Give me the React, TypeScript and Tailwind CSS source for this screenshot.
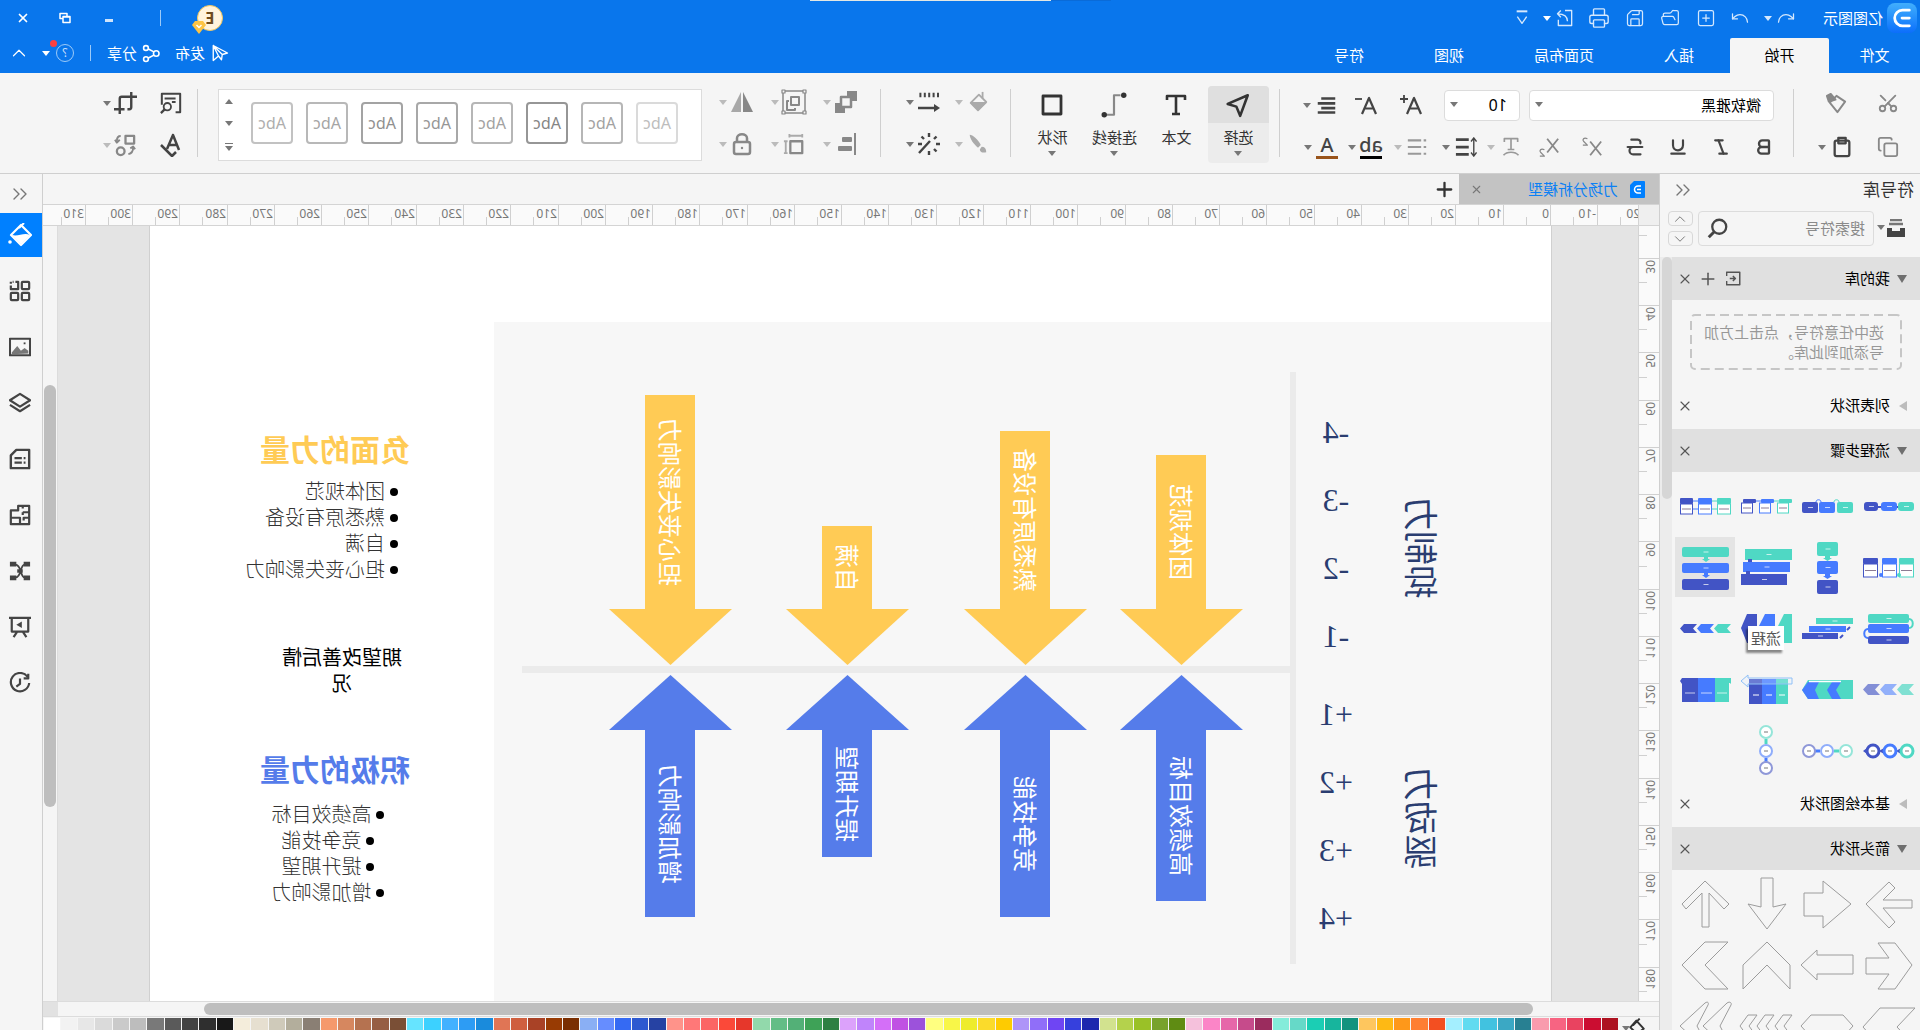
import React from "react";
import type { ReactNode } from "react";
import {
  Undo, Redo, SquarePlus, FolderOpen, Save, Printer, X, ChevronUp, ChevronDown,
  ChevronsLeft, Plus, Scissors, Copy, Bold, Italic, Underline, Strikethrough,
} from "lucide-react";

const TEAL = "#4fd8c4";
const BLUE = "#467bff";
const NAVY = "#4254c5";

function Ico({ size = 22, vb = 24, className = "", children }: { size?: number; vb?: number; className?: string; children: ReactNode }) {
  return (
    <svg width={size} height={size} viewBox={`0 0 ${vb} ${vb}`} className={`shrink-0 ${className}`} fill="none" stroke="currentColor" strokeWidth="2" strokeLinejoin="round" aria-hidden="true">
      {children}
    </svg>
  );
}

function Caret({ className = "text-[#777]" }: { className?: string }) {
  return (
    <svg width="8" height="5" viewBox="0 0 8 5" className={`shrink-0 ${className}`} aria-hidden="true">
      <path d="M0 0h8L4 5z" fill="currentColor" />
    </svg>
  );
}

function Btn({ label, className = "", children }: { label: string; className?: string; children: ReactNode }) {
  return (
    <button type="button" aria-label={label} className={`flex shrink-0 items-center justify-center ${className}`}>
      {children}
    </button>
  );
}

/* ---------- header ---------- */

const tabsAfter = ["插入", "页面布局", "视图", "符号"];

function Header() {
  return (
    <header className="relative flex h-[73px] shrink-0 justify-between bg-[#0976ec] text-[15px] text-white">
      <div className="absolute left-[809px] top-0 flex h-px">
        <div className="w-[60px] bg-[#0a6bd8]" />
        <div className="w-[241px] bg-[#e3e8e4]" />
      </div>
      <div className="flex flex-col justify-between">
        <div className="flex h-9 items-center pl-[3px] text-[#d5e8fd]">
          <div className="flex size-[30px] items-center justify-center rounded-lg bg-linear-to-b from-[#41aefc] to-[#0d6efb] text-white">
            <Ico size={22}>
              <path d="M4 3.500h7.500a8.500 8.500 0 0 1 0 17H4M4 12h8" strokeWidth="3" strokeLinecap="round" />
            </Ico>
          </div>
          <span className="ml-1 text-white">亿图图示</span>
          <Btn label="撤销" className="ml-[27px]"><Undo size={20} strokeWidth={1.5} /></Btn>
          <Caret className="ml-1 text-[#d5e8fd]" />
          <Btn label="重做" className="ml-[14px]"><Redo size={20} strokeWidth={1.5} /></Btn>
          <Btn label="新建" className="ml-[14px]"><SquarePlus size={20} strokeWidth={1.5} /></Btn>
          <Btn label="打开" className="ml-4"><FolderOpen size={20} strokeWidth={1.5} /></Btn>
          <Btn label="保存" className="ml-[15px]"><Save size={20} strokeWidth={1.5} /></Btn>
          <Btn label="打印" className="ml-[15px]"><Printer size={22} strokeWidth={1.5} /></Btn>
          <Btn label="导出" className="ml-[13px]">
            <Ico size={20}>
              <path d="M12 3H4v18h16V14M9 16c0-6 4-9 12-9M17 3l4 4-4 4" strokeWidth="1.600" />
            </Ico>
          </Btn>
          <Caret className="ml-1 text-white" />
          <Btn label="自定义" className="ml-[13px]">
            <Ico size={16}>
              <path d="M4 2h16" strokeWidth="3" />
              <path d="M5 10l7 10 7-10" />
            </Ico>
          </Btn>
        </div>
        <nav className="flex h-[35px]">
          <button type="button" className="w-[91px] pb-px">文件</button>
          <button type="button" className="mr-px w-[99px] rounded-t-xs bg-[#f5f5f5] text-black">开始</button>
          {tabsAfter.map((t) => (
            <button type="button" key={t} className="px-[35px]">{t}</button>
          ))}
        </nav>
      </div>
      <div className="flex flex-col">
        <div className="flex h-9 items-center justify-end pr-[15px]">
          <div className="relative mr-9 flex size-[26px] items-center justify-center rounded-full border border-[#f3c75e] bg-[#fff3dc] text-base font-bold text-[#6d4a1c]">
            E
            <svg width="14" height="14" viewBox="0 0 14 14" className="absolute -right-1.5 top-3.5" aria-hidden="true">
              <path d="M3 1h8l3 4-7 9-7-9z" fill="#fdc445" />
              <path d="M4.500 5l2.500 2.500L9.500 5" stroke="#fff" fill="none" strokeWidth="1.500" />
            </svg>
          </div>
          <div className="mr-[43px] h-4 w-px bg-[#9ccaf8]" />
          <Btn label="最小化" className="mr-7 w-4"><span className="mt-1 h-[3px] w-2 bg-[#cfe4fb]" /></Btn>
          <Btn label="还原" className="mr-[26px] w-4">
            <Ico size={12} vb={12}>
              <path d="M1 4.500h7v6H1zM1 5h7M4 4V1.500h7v5H8" strokeWidth="1.500" />
            </Ico>
          </Btn>
          <Btn label="关闭" className="w-4"><X size={14} strokeWidth={3} /></Btn>
        </div>
        <div className="flex h-[34px] items-center justify-end pr-2">
          <button type="button" className="mr-[14px] flex items-center gap-[6px]">
            <Ico size={18}>
              <path d="M2 12L21 2v20l-7-6-4 5-1-7z M14 16L21 2L9 14" strokeWidth="1.800" />
            </Ico>
            发布
          </button>
          <button type="button" className="mr-4 flex items-center gap-[5px]">
            <Ico size={19}>
              <circle cx="6" cy="12" r="3.500" />
              <circle cx="19" cy="5" r="3" />
              <circle cx="19" cy="19" r="3" />
              <path d="M9 10l7.500-4M9 14l7.500 4" />
            </Ico>
            分享
          </button>
          <div className="mr-4 h-4 w-px bg-[#9ccaf8]" />
          <Btn label="帮助" className="relative">
            <span className="flex size-[18px] items-center justify-center rounded-full border border-[#9ccaf8] text-xs text-[#c6dffb]">?</span>
            <span className="absolute -right-1.5 -top-1 size-[7px] rounded-full bg-[#fb4040]" />
          </Btn>
          <Caret className="ml-[6px] text-white" />
          <Btn label="收起功能区" className="ml-3"><ChevronUp size={22} strokeWidth={1.3} /></Btn>
        </div>
      </div>
    </header>
  );
}

/* ---------- toolbar ---------- */

function ToolWithCaret({ label, dim = false, children }: { label: string; dim?: boolean; children: ReactNode }) {
  return (
    <button type="button" aria-label={label} className="flex w-[35px] items-center gap-[3px]">
      <span className="flex size-6 items-center justify-center">{children}</span>
      <Caret className={dim ? "text-[#bbb]" : "text-[#777]"} />
    </button>
  );
}

function BigTool({ label, caret = true, active = false, children }: { label: string; caret?: boolean; active?: boolean; children: ReactNode }) {
  return (
    <button type="button" className={`flex h-[77px] w-[61px] flex-col items-center rounded-sm text-[15px] text-[#333] ${active ? "bg-[#ececec]" : ""}`}>
      <span className={`flex h-[37px] w-full items-center justify-center ${active ? "rounded-t-sm bg-[#dfdfdf]" : ""}`}>{children}</span>
      <span className="mt-[3px] leading-[22px]">{label}</span>
      {caret ? <Caret className="mt-[3px] text-[#777]" /> : null}
    </button>
  );
}

const styleBoxes = [
  "border-[#dadada] text-[#bdbdbd]",
  "border-[#b6b6b6] text-[#a2a2a2]",
  "border-[#969696] text-[#858585]",
  "border-[#b6b6b6] text-[#a2a2a2]",
  "border-[#a8a8a8] text-[#969696]",
  "border-[#a3a3a3] text-[#909090]",
  "border-[#b8b8b8] text-[#a5a5a5]",
  "border-[#c2c2c2] text-[#aeaeae]",
];

function Divider() {
  return <div className="my-4 w-px shrink-0 bg-[#cfcfcf]" />;
}

function Toolbar() {
  return (
    <div className="flex h-[101px] shrink-0 border-b border-[#cfcfcf] bg-[#f5f5f5] text-[#444]">
      <div className="flex w-[126px] shrink-0 flex-col pl-5 pt-[11px]">
        <div className="flex h-[42px] items-center pb-1 text-[#888]">
          <Btn label="剪切" className="w-6"><Scissors size={22} className="-rotate-90" /></Btn>
          <Btn label="格式刷" className="ml-[27px] w-6">
            <Ico size={23}>
              <path d="M3 10l9-6 7 7-8 10z" />
              <path d="M13 8l5-6 4 2-2 6z" fill="currentColor" />
            </Ico>
          </Btn>
        </div>
        <div className="flex h-[42px] items-center">
          <Btn label="复制" className="w-6 text-[#888]"><Copy size={22} className="-scale-x-100" /></Btn>
          <Btn label="粘贴" className="ml-[22px] w-6">
            <Ico size={22}>
              <rect x="4" y="5" width="16" height="17" rx="2" strokeWidth="2.500" />
              <path d="M8 2h8v6H8z" strokeWidth="2.500" />
            </Ico>
          </Btn>
          <Caret className="ml-1 text-[#777]" />
        </div>
      </div>
      <Divider />
      <div className="flex w-[513px] shrink-0 flex-col pt-[11px]">
        <div className="flex h-[42px] items-center pl-[19px]">
          <div className="relative">
            <select aria-label="字体" defaultValue="yahei" className="block h-[31px] w-[245px] appearance-none rounded-sm border border-[#dcdcdc] bg-white px-3 text-[15px] text-black">
              <option value="yahei">微软雅黑</option>
            </select>
            <span className="absolute right-1.5 top-3"><Caret /></span>
          </div>
          <div className="relative ml-[9px]">
            <select aria-label="字号" defaultValue="10" className="block h-[31px] w-[76px] appearance-none rounded-sm border border-[#dcdcdc] bg-white px-3 text-base text-black">
              <option>10</option>
            </select>
            <span className="absolute right-1.5 top-3"><Caret /></span>
          </div>
          <Btn label="增大字号" className="ml-[21px] w-6">
            <Ico size={24}>
              <path d="M2 21L9 5l7 16M4.500 15.500h9" strokeWidth="2.200" />
              <path d="M19 2v8M15 6h8" strokeWidth="1.800" />
            </Ico>
          </Btn>
          <Btn label="减小字号" className="ml-[21px] w-6">
            <Ico size={24}>
              <path d="M2 21L9 5l7 16M4.500 15.500h9" strokeWidth="2.200" />
              <path d="M16 6h7" strokeWidth="1.800" />
            </Ico>
          </Btn>
          <Btn label="对齐" className="ml-[15px] w-6">
            <Ico size={21}>
              <path d="M2 4h16M2 9.500h20M2 15h16M2 20h20" strokeWidth="3" />
            </Ico>
          </Btn>
          <Caret className="ml-1 text-[#777]" />
        </div>
        <div className="flex h-[42px] items-center pl-[17px]">
          <Btn label="加粗" className="w-6"><Bold size={20} strokeWidth={2.8} /></Btn>
          <Btn label="斜体" className="ml-[19px] w-6"><Italic size={20} strokeWidth={2.6} /></Btn>
          <Btn label="下划线" className="ml-[19px] w-6"><Underline size={20} strokeWidth={2.6} /></Btn>
          <Btn label="删除线" className="ml-[19px] w-6"><Strikethrough size={22} strokeWidth={2.4} /></Btn>
          <Btn label="上标" className="ml-[19px] w-6 text-[#888]">
            <Ico size={22}>
              <path d="M2 6l12 15M14 6L2 21" />
              <path d="M17 3c4-2 6 1 4 3l-4 4h5" strokeWidth="1.300" />
            </Ico>
          </Btn>
          <Btn label="下标" className="ml-[19px] w-6 text-[#888]">
            <Ico size={22}>
              <path d="M2 3l12 15M14 3L2 18" />
              <path d="M17 15c4-2 6 1 4 3l-4 4h5" strokeWidth="1.300" />
            </Ico>
          </Btn>
          <Btn label="文字方向" className="ml-[14px] w-6 text-[#999]">
            <Ico size={20}>
              <path d="M4 6V2h16v4M12 2v13M8 15h8M3 22c4-5 14-5 18 0" />
            </Ico>
          </Btn>
          <Caret className="ml-1 text-[#bbb]" />
          <Btn label="行距" className="ml-[9px] w-6">
            <Ico size={22}>
              <path d="M9 4h14M9 12h14M9 20h14" strokeWidth="3" />
              <path d="M3.500 2v20M0.500 6l3-4 3 4M0.500 18l3 4 3-4" strokeWidth="1.500" />
            </Ico>
          </Btn>
          <Caret className="ml-1 text-[#777]" />
          <Btn label="项目符号" className="ml-[13px] w-6 text-[#999]">
            <Ico size={20}>
              <path d="M1 4h3M7 4h16M1 12h3M7 12h16M1 20h3M7 20h16" strokeWidth="2.500" />
            </Ico>
          </Btn>
          <Caret className="ml-[3px] text-[#bbb]" />
          <button type="button" aria-label="突出显示" className="ml-[11px] flex w-6 flex-col items-center text-xl leading-[18px] font-medium">
            ab
            <span className="mt-0.5 h-[3px] w-[22px] bg-black" />
          </button>
          <Caret className="ml-[3px] text-[#777]" />
          <button type="button" aria-label="字体颜色" className="ml-[9px] flex w-6 flex-col items-center text-xl leading-[18px] font-medium">
            A
            <span className="mt-0.5 h-[3px] w-[22px] bg-[#99541b]" />
          </button>
          <Caret className="ml-[3px] text-[#777]" />
        </div>
      </div>
      <Divider />
      <div className="flex w-[268px] shrink-0 gap-px pl-2.5 pt-[13px]">
        <BigTool label="选择" active>
          <Ico size={26}>
            <path d="M3 3l18.500 8-8 2.500L10 22z" strokeWidth="2.400" />
          </Ico>
        </BigTool>
        <BigTool label="文本" caret={false}>
          <Ico size={24}>
            <path d="M3 7V3h18v4M12 3v18M8 21h8" strokeWidth="2.600" />
          </Ico>
        </BigTool>
        <BigTool label="连接线">
          <Ico size={26}>
            <path d="M6 3h6v18h7" strokeWidth="2" stroke="#888" />
            <circle cx="3" cy="3" r="2.500" fill="currentColor" stroke="none" />
            <circle cx="21" cy="21" r="2.500" fill="currentColor" stroke="none" />
          </Ico>
        </BigTool>
        <BigTool label="形状">
          <Ico size={24}>
            <rect x="3" y="3" width="18" height="18" strokeWidth="2.800" />
          </Ico>
        </BigTool>
      </div>
      <Divider />
      <div className="flex w-[129px] shrink-0 flex-col pl-5 pt-2">
        <div className="flex h-[42px] items-center gap-[14px]">
          <ToolWithCaret label="填充" dim>
            <Ico size={22} className="text-[#aaa]">
              <path d="M3 12l8-8 9 9-8 8z" />
              <path d="M4 13h15l-7 7z" fill="currentColor" />
              <path d="M7 1v7" />
            </Ico>
          </ToolWithCaret>
          <ToolWithCaret label="线条样式">
            <Ico size={24}>
              <path d="M2 5h20" strokeWidth="4.500" strokeDasharray="2 2.400" />
              <path d="M5 18h18" strokeWidth="2.500" />
              <path d="M7 14l-6 4 6 4z" fill="currentColor" stroke="none" />
            </Ico>
          </ToolWithCaret>
        </div>
        <div className="flex h-[42px] items-center gap-[14px]">
          <ToolWithCaret label="画笔" dim>
            <Ico size={22} className="text-[#aaa]">
              <path d="M21 2c-3 0-9 5-12 11l3 3c5-4 9-10 9-14z" fill="currentColor" stroke="none" />
              <path d="M8 15c-3 0-5 2-5 6 4 1 7 0 7-3z" fill="currentColor" stroke="none" />
            </Ico>
          </ToolWithCaret>
          <ToolWithCaret label="效果">
            <Ico size={24}>
              <path d="M11 9l11 12M12 1v4M1 12h4M12 19v4M19 12h4M4.500 4.500l2.500 2.500M19.500 4.500L17 7M4.500 19.500L7 17" strokeWidth="2.400" />
            </Ico>
          </ToolWithCaret>
        </div>
      </div>
      <Divider />
      <div className="flex w-[178px] shrink-0 flex-col pl-[22px] pt-2">
        <div className="flex h-[42px] items-center gap-[17px] text-[#888]">
          <ToolWithCaret label="图层顺序" dim>
            <Ico size={24}>
              <path d="M1 1h10v5H6v5H1zM23 23H13v-5h5v-5h5z" fill="currentColor" stroke="none" />
              <rect x="7" y="7" width="10" height="10" strokeWidth="2.500" />
            </Ico>
          </ToolWithCaret>
          <ToolWithCaret label="组合" dim>
            <Ico size={26} vb={26}>
              <path d="M2 2h22v22H2z" strokeWidth="1.500" />
              <path d="M8 8h8v8H8z" />
              <path d="M18 12h2v9h-8v-2" />
              <path d="M1 1h3v3H1zM22 1h3v3h-3zM1 22h3v3H1zM22 22h3v3h-3z" fill="#f5f5f5" strokeWidth="1.200" />
            </Ico>
          </ToolWithCaret>
          <ToolWithCaret label="翻转" dim>
            <Ico size={24}>
              <path d="M11 2v20H1z" fill="currentColor" stroke="none" />
              <path d="M13 2v20h10z" fill="#a8a8a8" stroke="none" />
            </Ico>
          </ToolWithCaret>
        </div>
        <div className="flex h-[42px] items-center gap-[17px] text-[#888]">
          <ToolWithCaret label="对齐形状" dim>
            <Ico size={24}>
              <path d="M3 1v22" />
              <rect x="6" y="5" width="10" height="5" rx="1" fill="currentColor" stroke="none" />
              <rect x="6" y="14" width="14" height="5" rx="1" fill="currentColor" stroke="none" />
            </Ico>
          </ToolWithCaret>
          <ToolWithCaret label="大小" dim>
            <Ico size={22}>
              <rect x="3" y="9" width="13" height="13" strokeWidth="2.500" />
              <path d="M3 3h14M3 1v4M17 1v4M21 9v14M19 9h4M19 22h4" stroke="#aaa" />
            </Ico>
          </ToolWithCaret>
          <ToolWithCaret label="锁定" dim>
            <Ico size={24}>
              <rect x="4" y="10" width="16" height="12" rx="2" strokeWidth="2.500" />
              <path d="M7 9V6c0-5 10-5 10 0v3" strokeWidth="2.500" />
              <circle cx="12" cy="16" r="1.200" fill="currentColor" stroke="none" />
            </Ico>
          </ToolWithCaret>
        </div>
      </div>
      <div className="mt-4 flex h-[72px] w-[484px] shrink-0 items-start border border-[#dcdcdc] bg-white">
        <div className="flex gap-[13px] pl-[23px] pt-3">
          {styleBoxes.map((c, i) => (
            <button type="button" key={i} className={`size-[42px] rounded-sm border-2 text-base ${c}`}>Abc</button>
          ))}
        </div>
        <div className="ml-auto flex h-full w-[14px] flex-col items-start justify-around">
          <Btn label="上一行"><span className="rotate-180"><Caret /></span></Btn>
          <Btn label="下一行"><Caret /></Btn>
          <Btn label="更多样式" className="flex-col gap-0.5">
            <span className="h-px w-2 bg-[#777]" />
            <Caret />
          </Btn>
        </div>
      </div>
      <div className="my-4 ml-5 w-px shrink-0 bg-[#cfcfcf]" />
      <div className="flex flex-col pl-[14px] pt-[9px]">
        <div className="flex h-[42px] items-center">
          <Btn label="查找替换" className="w-6">
            <Ico size={22}>
              <path d="M7 22H2V2h20v12M2 2v20M7 7h12M7 11h4" strokeWidth="2.200" />
              <circle cx="16" cy="16" r="4" />
              <path d="M19 19l4 4" strokeWidth="2.500" />
            </Ico>
          </Btn>
          <Btn label="裁剪" className="ml-[21px] w-6">
            <Ico size={23}>
              <path d="M6 0v16c0 1 0 2 2 2h2M0 5h16c1 0 2 0 2 2v16M13 18h11" strokeWidth="2.500" />
            </Ico>
          </Btn>
          <Caret className="ml-[3px] text-[#777]" />
        </div>
        <div className="flex h-[42px] items-center">
          <Btn label="拼写检查" className="w-6">
            <Ico size={24}>
              <path d="M4 17L10 2l6 14M6 12h8" strokeWidth="2.500" />
              <path d="M7 19l4 4L22 12" strokeWidth="2.500" />
            </Ico>
          </Btn>
          <Btn label="替换形状" className="ml-[21px] w-6 text-[#888]">
            <Ico size={23}>
              <rect x="3" y="2" width="9" height="8" strokeWidth="2.400" />
              <circle cx="17" cy="18" r="4" strokeWidth="2.400" />
              <path d="M17 2c3 0 4 2 4 5M18 6l3 3 2-3M4 14c0 4 1 6 5 7M2 16l2-3 3 2" />
            </Ico>
          </Btn>
          <Caret className="ml-[3px] text-[#bbb]" />
        </div>
      </div>
    </div>
  );
}

/* ---------- symbol library ---------- */

function Bars({ boxes, rx = 1 }: { boxes: number[][]; rx?: number }) {
  const fills = [TEAL, BLUE, NAVY];
  return (
    <g>
      {boxes.map(([x, y, w, h], i) => (
        <g key={i}>
          <rect x={x} y={y} width={w} height={h} rx={rx} fill={fills[i % 3]} />
          <path d={`M${x + w / 2 - 3} ${y + h / 2}h5`} stroke="#fff" strokeWidth="1" opacity="0.700" />
        </g>
      ))}
    </g>
  );
}

function Cards({ cards, headH, bodyH, y, shift = 0, headW }: { cards: number[][]; headH: number; bodyH: number; y: number; shift?: number; headW?: number }) {
  const fills = [TEAL, BLUE, NAVY];
  return (
    <g>
      {cards.map(([x, w], i) => (
        <g key={i}>
          <rect x={x + shift + 0.5} y={y + headH} width={w - 1} height={bodyH} fill="#fff" stroke={fills[i]} />
          <rect x={x} y={y} width={headW ?? w} height={headH} rx="1" fill={fills[i]} />
          <path d={`M${x + shift + 2} ${y + headH + bodyH / 2}h${w - 4}`} stroke="#8d7c93" />
        </g>
      ))}
    </g>
  );
}

function Ring({ cx, cy, color, w }: { cx: number; cy: number; color: string; w: number }) {
  return (
    <g>
      <circle cx={cx} cy={cy} r="6" fill="#fff" stroke={color} strokeWidth={w} />
      <path d={`M${cx - 2} ${cy}h4`} stroke="#777" />
    </g>
  );
}

const chevron = (x: number, y: number, w: number, h: number, notch: number) =>
  `M${x} ${y}h${w - notch}l${notch} ${h / 2}l${-notch} ${h / 2}h${-(w - notch)}l${notch} ${-h / 2}z`;

const processSymbols: ReactNode[] = [
  <g><path d="M18 31h25" stroke={NAVY} strokeWidth="2" /><Bars rx={3} boxes={[[4, 26, 16, 9], [21, 26, 16, 9], [40, 26, 14, 9]]} /></g>,
  <g><path d="M18 26c0-3 5-3 5 0" stroke={TEAL} fill="none" /><path d="M36 26c0-3 5-3 5 0" stroke={BLUE} fill="none" /><Bars rx={2} boxes={[[4, 26, 16, 11], [22, 26, 16, 11], [39, 26, 16, 11]]} /></g>,
  <g><path d="M16 25h8" stroke={TEAL} /><path d="M34 25h8" stroke={BLUE} /><Cards cards={[[4, 12], [22, 12], [40, 12]]} headH={4} bodyH={10} y={23} shift={3} headW={13} /></g>,
  <g><path d="M17 25h7M17 33h7" stroke={TEAL} /><path d="M36 25h7M36 33h7" stroke={BLUE} /><Cards cards={[[4, 14], [23, 14], [42, 13]]} headH={6} bodyH={10} y={22} /></g>,
  <g><Cards cards={[[4, 15], [21, 15], [40, 15]]} headH={6} bodyH={13} y={21} /><circle cx="19" cy="38" r="2" fill={TEAL} /><circle cx="37" cy="38" r="2" fill={BLUE} /></g>,
  <g><path d="M27 19h5v2h2l-4.500 3-4.500-3h2z" fill={TEAL} /><path d="M27 37h5v2h2l-4.500 3-4.500-3h2z" fill={BLUE} /><Bars rx={2} boxes={[[19, 5, 21, 14], [19, 24, 21, 13], [19, 43, 21, 14]]} /></g>,
  <g><Bars rx={0} boxes={[[4, 12, 47, 11], [6, 25, 47, 10], [9, 37, 46, 11]]} /><path d="M44 22h4v3h-4zM46 34h4v3h-4z" fill={NAVY} /></g>,
  <g><path d="M27 20h4v2h2l-4 3-4-3h2z" fill={TEAL} /><path d="M27 36h4v2h2l-4 3-4-3h2z" fill={BLUE} /><Bars rx={2} boxes={[[6, 10, 47, 10], [6, 26, 47, 10], [6, 42, 47, 11]]} /></g>,
  <g><path d="M9 21c-5 0-5 9 0 9" stroke={TEAL} strokeWidth="2" fill="none" /><path d="M50 31c5 0 5 9 0 9" stroke={BLUE} strokeWidth="2" fill="none" /><Bars rx={2} boxes={[[9, 16, 41, 9], [9, 26, 41, 9], [9, 38, 41, 8]]} /></g>,
  <g><Bars rx={0} boxes={[[4, 20, 37, 6], [11, 28, 37, 6], [19, 35, 36, 6]]} /><path d="M7 29l3 3M14 37l3 3" stroke={NAVY} strokeWidth="2" /></g>,
  <g><path d="M4 16h8l7 14-3 15H4z" fill={TEAL} /><path d="M21 16h10l7 14-7 15H21z" fill={BLUE} /><path d="M39 16h10l6 14-6 15H39z" fill={NAVY} /></g>,
  <g><path d={chevron(4, 26, 17, 9, 4)} fill={TEAL} /><path d={chevron(21, 26, 17, 9, 4)} fill={BLUE} /><path d={chevron(38, 26, 17, 9, 4)} fill={NAVY} /></g>,
  <g opacity="0.700"><path d={chevron(4, 25, 17, 11, 5)} fill={TEAL} /><path d={chevron(21, 25, 17, 11, 5)} fill={BLUE} opacity="0.800" /><path d={chevron(38, 25, 17, 11, 5)} fill={NAVY} opacity="0.900" /></g>,
  <g><path d="M4 21h45l6 10-6 9H4z" fill={TEAL} /><path d="M16 23h9l5 8-5 9h-9l5-9zM38 23h11l6 8-6 9H38l4-9z" fill={BLUE} /><path d="M16 22.500h32" stroke="#fff" strokeWidth="1.500" /></g>,
  <g><path d="M8 20h12v25H8z" fill={TEAL} /><path d="M20 20h14v25H20z" fill={BLUE} /><path d="M34 20h13v25H34z" fill={NAVY} /><path d="M4 19h44v-3l7 6-7 6v-3H4z" fill="#e2f0ff" fillOpacity="0.250" stroke="#8fc0f7" /><path d="M11 36h6M24 36h6M37 36h6" stroke="#fff" /></g>,
  <g><path d="M4 19l3 3-3 3zM4 19h16v24H6V24H4z" fill={TEAL} /><path d="M20 19h17v24H20z" fill={BLUE} /><path d="M37 19h16l2 3-2 3v18H37z" fill={NAVY} /><path d="M8 34h10M23 34h11M40 34h10" stroke="#fff" opacity="0.700" /></g>,
  <g><path d="M17 28l5 3-5 3zM34 28l5 3-5 3zM51 28l4 3-4 3z" fill={NAVY} /><Ring cx={11} cy={31} color={TEAL} w={3} /><Ring cx={28} cy={31} color={BLUE} w={3} /><Ring cx={45} cy={31} color={NAVY} w={3} /></g>,
  <g><path d="M18 31h5" stroke={TEAL} strokeWidth="3" /><path d="M37 31h5" stroke={BLUE} strokeWidth="3" /><Ring cx={11} cy={31} color="#95e5d9" w={2} /><Ring cx={30} cy={31} color="#8fadfb" w={2} /><Ring cx={48} cy={31} color="#8f98d8" w={2} /></g>,
  <g><path d="M30 19v5" stroke={TEAL} strokeWidth="3" /><path d="M30 38v4" stroke={BLUE} strokeWidth="3" /><Ring cx={30} cy={12} color="#95e5d9" w={2} /><Ring cx={30} cy={31} color="#8fadfb" w={2} /><Ring cx={30} cy={48} color="#8f98d8" w={2} /></g>,
];

const arrowShapes = [
  "M52 30L29 8l-6 6 12 12H6v8h29L23 48l6 6z",
  "M53 19H34V7L6 30l28 24V42h19z",
  "M35 4H23v29l-13-3 19 25 19-25-13 3z",
  "M30 7L6 30l5 5 15-16v34h7V19l16 16 4-5z",
  "M52 23H29L40 8H23L6 30l17 24h17L29 39h23z",
  "M56 30L40 15v5H4v19h36v6z",
  "M29 7L6 30v24l23-24 24 24V30z",
  "M30 7H7l23 23L7 54h23l23-24z",
  "M3 12h35l17 19-17 19H3l18-19z",
  "M56 30L46 19H14L4 30l10 11h32z",
  "M56 30l-8-11h-9l8 11-8 11h9zM39 30l-8-11h-9l8 11-8 11h9zM21 30l-8-11H4l8 11-8 11h9z",
  "M55 30L30 7c-3-2-4 0-3 2l11 21-11 21c-1 2 0 4 3 2zM32 30L8 7C5 5 3 7 4 9l11 21L4 51c-1 2 0 4 3 2z",
];

function SectionHeader({ title, open, tools = false }: { title: string; open: boolean; tools?: boolean }) {
  return (
    <div className={`flex h-[43px] items-center pl-[13px] pr-[5px] text-[15px] text-black ${open ? "bg-[#e0e0e0]" : "pb-1"}`}>
      <button type="button" className="flex items-center">
        <span className="flex w-[17px]">
          {open ? (
            <svg width="10" height="8" viewBox="0 0 10 8" aria-hidden="true"><path d="M0 0h10L5 8z" fill="#6f6f6f" /></svg>
          ) : (
            <svg width="8" height="10" viewBox="0 0 8 10" aria-hidden="true"><path d="M0 0v10l8-5z" fill="#bcbcbc" /></svg>
          )}
        </span>
        {title}
      </button>
      <div className="ml-auto flex items-center text-[#555]">
        {tools ? (
          <>
            <Btn label="导入" className="mr-2">
              <Ico size={15}>
                <path d="M23 8V2H2v20h21v-6M18 12H9M13 8l-4 4 4 4" strokeWidth="2.400" />
              </Ico>
            </Btn>
            <Btn label="新增" className="mr-[5px]"><Plus size={20} strokeWidth={1.8} /></Btn>
          </>
        ) : null}
        <Btn label="关闭"><X size={16} strokeWidth={1.6} /></Btn>
      </div>
    </div>
  );
}

function SymbolLibrary() {
  return (
    <aside className="flex w-[261px] shrink-0 flex-col border-r border-[#cfcfcf] bg-[#f5f5f5]">
      <div className="flex h-[31px] shrink-0 items-center justify-between pl-[6px] pr-[11px] text-[17px] text-[#333]">
        符号库
        <Btn label="折叠" className="text-[#777]"><ChevronsLeft size={24} strokeWidth={1.4} /></Btn>
      </div>
      <div className="flex h-[52px] shrink-0 items-start pl-[15px] pt-[6px] text-[#444]">
        <Btn label="符号库列表" className="mt-[8px]">
          <Ico size={18} vb={18}>
            <path d="M3 1h12M2 5h14" stroke="#777" strokeWidth="2.500" />
            <path d="M0 9h5v3h8V9h5v9H0z" fill="currentColor" stroke="none" />
          </Ico>
        </Btn>
        <span className="ml-[2px] mt-[14px]"><Caret /></span>
        <div className="ml-[3px] flex h-[35px] w-[176px] items-center rounded-sm border border-[#dcdcdc] pr-2">
          <input aria-label="搜索符号" placeholder="搜索符号" className="min-w-0 flex-1 bg-transparent pl-2 text-[15px] placeholder:text-[#8a8a8a]" />
          <Ico size={21}>
            <circle cx="10" cy="10" r="8" strokeWidth="2.600" />
            <path d="M16 16l6 6" strokeWidth="3.500" />
          </Ico>
        </div>
        <div className="ml-[5px] flex flex-col gap-[5px] text-[#777]">
          <Btn label="上一个" className="h-[15px] w-[25px] rounded-sm border border-[#d8d8d8]"><ChevronUp size={18} strokeWidth={1.3} /></Btn>
          <Btn label="下一个" className="h-[15px] w-[25px] rounded-sm border border-[#d8d8d8]"><ChevronDown size={18} strokeWidth={1.3} /></Btn>
        </div>
      </div>
      <div className="flex min-h-0 flex-1">
        <div className="w-[248px] overflow-hidden">
          <SectionHeader title="我的库" open tools />
          <div className="px-[18px] pb-4 pt-[14px]">
            <div className="relative flex h-14 flex-col justify-center pl-[18px] text-[15px] leading-5 text-[#989898]">
              <svg className="absolute inset-0 size-full" aria-hidden="true">
                <rect x="1" y="1" width="210" height="54" rx="4" fill="none" stroke="#c6c6c6" strokeWidth="2" strokeDasharray="9 5" />
              </svg>
              <p className="whitespace-nowrap">选中任意符号，点击上方加</p>
              <p className="whitespace-nowrap">号添加到此库。</p>
            </div>
          </div>
          <SectionHeader title="列表形状" open={false} />
          <SectionHeader title="流程步骤" open />
          <div className="grid grid-cols-4 gap-px pb-1 pl-0.5 pr-[3px] pt-1">
            {processSymbols.map((s, i) => (
              <button type="button" key={i} aria-label="流程" className={`relative size-[60px] ${i === 7 ? "bg-[#e4e4e4]" : ""}`}>
                <svg width="60" height="60" viewBox="0 0 60 60" aria-hidden="true">{s}</svg>
                {i === 10 ? (
                  <span role="tooltip" className="absolute left-3 top-7 z-10 bg-white px-[3px] text-[15px] leading-6 text-[#555] shadow-[2px_3px_2px_rgba(0,0,0,0.45)]">流程</span>
                ) : null}
              </button>
            ))}
          </div>
          <SectionHeader title="基本绘图形状" open={false} />
          <SectionHeader title="箭头形状" open />
          <div className="grid grid-cols-4 gap-px pl-0.5 pr-[3px] pt-1">
            {arrowShapes.map((d) => (
              <button type="button" key={d} aria-label="箭头" className="size-[60px]">
                <svg width="60" height="60" viewBox="0 0 60 60" aria-hidden="true">
                  <path d={d} fill="none" stroke="#9c9c9c" />
                </svg>
              </button>
            ))}
          </div>
        </div>
        <div className="flex-1 bg-[#ececec]">
          <div className="h-[242px] w-[10px] rounded-full bg-[#d6d6d6]" />
        </div>
      </div>
    </aside>
  );
}

/* ---------- rulers ---------- */

const UNIT = 4.726;

function HorizontalRuler() {
  const marks = Array.from({ length: 34 }, (_, i) => -20 + i * 10);
  return (
    <div className="flex h-[21px] overflow-hidden border-b border-[#d4d4d4] bg-[#fafafa] text-xs leading-[17px] text-[#777]">
      <div className="z-10 w-[21px] shrink-0 border-r border-[#d4d4d4] bg-[#efefef]" />
      <div className="-ml-2 flex">
        {marks.map((m) => {
          const width = Math.round((m + 10) * UNIT) - Math.round(m * UNIT);
          return (
            <div key={m} className="relative h-5 shrink-0 border-l border-[#d0d0d0] pl-px" style={{ width }}>
              {m}
              <span className="absolute bottom-0 left-1/2 h-2 w-px bg-[#d0d0d0]" />
            </div>
          );
        })}
      </div>
    </div>
  );
}

function VerticalRuler() {
  const marks = Array.from({ length: 17 }, (_, i) => 20 + i * 10);
  return (
    <div className="flex w-[21px] shrink-0 flex-col overflow-hidden border-r border-[#d4d4d4] bg-[#fafafa] text-xs text-[#777]">
      <div className="-mt-[15px] flex flex-col">
        {marks.map((m, i) => {
          const height = Math.round((m + 10) * UNIT) - Math.round(m * UNIT);
          return (
            <div key={m} className="relative shrink-0 border-t border-[#d0d0d0] pt-px" style={{ height }}>
              {i > 0 ? <span className="block rotate-180 leading-[18px] [writing-mode:vertical-rl]">{m}</span> : null}
              <span className="absolute right-0 top-1/2 h-px w-2 bg-[#d0d0d0]" />
            </div>
          );
        })}
      </div>
    </div>
  );
}

/* ---------- diagram ---------- */

const downArrows = [
  { text: "团体规范", place: "left-[308px] top-[229px] h-[210px]" },
  { text: "熟悉原有设备", place: "left-[464px] top-[205px] h-[234px]" },
  { text: "自满", place: "left-[642px] top-[300px] h-[139px]" },
  { text: "担心丧失影响力", place: "left-[819px] top-[169px] h-[270px]" },
];

const upArrows = [
  { text: "高绩效目标", place: "left-[308px] top-[449px] h-[226px]" },
  { text: "竞争技能", place: "left-[464px] top-[449px] h-[242px]" },
  { text: "提升期望", place: "left-[642px] top-[449px] h-[182px]" },
  { text: "增加影响力", place: "left-[819px] top-[449px] h-[242px]" },
];

const sideways = "rotate-180 whitespace-nowrap [text-orientation:sideways] [writing-mode:vertical-rl]";

function DownArrow({ text, place }: { text: string; place: string }) {
  return (
    <div className={`absolute flex w-[123px] flex-col items-center text-2xl text-white ${place}`}>
      <div className="flex w-[50px] flex-1 items-center justify-center bg-[#ffcb55]"><span className={sideways}>{text}</span></div>
      <svg width="123" height="56" viewBox="0 0 123 56" className="shrink-0" aria-hidden="true"><path d="M0 0h123L61.500 56z" fill="#ffcb55" /></svg>
    </div>
  );
}

function UpArrow({ text, place }: { text: string; place: string }) {
  return (
    <div className={`absolute flex w-[123px] flex-col items-center text-2xl text-white ${place}`}>
      <svg width="123" height="55" viewBox="0 0 123 55" className="shrink-0" aria-hidden="true"><path d="M0 55h123L61.500 0z" fill="#557cea" /></svg>
      <div className="flex w-[50px] flex-1 items-center justify-center bg-[#557cea]"><span className={sideways}>{text}</span></div>
    </div>
  );
}

function Scale({ values, place }: { values: string[]; place: string }) {
  return (
    <ul className={`absolute left-[185px] w-[60px] text-center font-['Liberation_Serif',serif] text-[32px] text-[#2a3d70] ${place}`}>
      {values.map((v) => <li key={v} className="h-[68px] leading-[68px]">{v}</li>)}
    </ul>
  );
}

function Bullets({ items, className }: { items: string[]; className: string }) {
  return (
    <ul className={`absolute flex flex-col text-xl font-light text-[#333] ${className}`}>
      {items.map((t) => (
        <li key={t} className="flex h-[26px] items-center gap-[5px] whitespace-nowrap">
          <span className="size-2 rounded-full bg-black" />
          {t}
        </li>
      ))}
    </ul>
  );
}

function Diagram() {
  return (
    <div className="absolute inset-y-0 left-[86px] right-[91px] overflow-hidden border-x border-[#d0d0d0] bg-white">
      <div className="absolute bottom-0 left-0 top-[96px] w-[1057px] bg-[#f7f7f7]" />
      <div className="absolute left-[255px] top-[146px] h-[592px] w-[6px] bg-[#ebebeb]" />
      <div className="absolute left-[255px] top-[440px] h-[7px] w-[774px] bg-[#ebebeb]" />
      <div className="absolute left-[105px] top-[267px] flex h-[110px] w-[50px] items-center justify-center text-[34px] text-[#2a3d70]"><span className={sideways}>抑制力</span></div>
      <div className="absolute left-[105px] top-[537px] flex h-[110px] w-[50px] items-center justify-center text-[34px] text-[#2a3d70]"><span className={sideways}>驱动力</span></div>
      <Scale values={["-4", "-3", "-2", "-1"]} place="top-[172px]" />
      <Scale values={["+1", "+2", "+3", "+4"]} place="top-[454px]" />
      {downArrows.map((a) => <DownArrow key={a.text} {...a} />)}
      {upArrows.map((a) => <UpArrow key={a.text} {...a} />)}
      <h2 className="absolute left-[1141px] top-[204px] text-3xl leading-10 font-bold text-[#ffcb55]">负面的力量</h2>
      <Bullets className="left-[1153px] top-[253px]" items={["团体规范", "熟悉原有设备", "自满", "担心丧失影响力"]} />
      <p className="absolute left-[1148px] top-[419px] w-[122px] text-center text-xl leading-[26px] text-black">期望改善后情况</p>
      <h2 className="absolute left-[1141px] top-[524px] text-3xl leading-10 font-bold text-[#557cea]">积极的力量</h2>
      <Bullets className="left-[1162px] top-[576px] w-[122px] items-center" items={["高绩效目标", "竞争技能", "提升期望", "增加影响力"]} />
    </div>
  );
}

const palette = (
  "ad1220 cb0d31 e94360 f76482 f99bad 288092 3ba8c4 41c2e0 61dbf0 a4efff f34f21 fe7e33 fe981a feb914 fec65e " +
  "13937e 17b59d 1bceb4 66d9c8 84ecda 9b2c5e c64b8b e667a9 fb85c7 f5c1dc 5f8c13 78a22c 9ac127 b4d24c d2e28f " +
  "1d27ae 3640dd 6f45f3 906ef9 ae94f8 fecb01 fbdb2b eeec2c f8f648 ffff80 9c52db c052e3 d46ff8 c084fb dca2fb " +
  "2e8042 3ea257 53b077 63bd86 92d9ab e6372b fb4939 fb6565 ff7878 ff938a 2642a3 2d59d0 356af3 668dff 8aaff4 " +
  "7a2f02 983b03 a94226 cf5f3f e07555 1a8bdc 2d9cf4 42b1ff 3cd1ff 66e4ff 7a4f36 965e43 b57250 d6875f f5996c " +
  "8a7f74 b3ae9c cfcaba e6dfd0 f4eddb 181818 2f2f2f 434343 5a5a5a 797979 bdbdbd cacaca dadada e7e7e7 f2f2f2 ffffff"
).split(" ");

function Workspace() {
  return (
    <main className="flex min-w-0 flex-1 flex-col bg-[#f5f5f5]">
      <div className="flex h-[31px] shrink-0 border-b border-[#d4d4d4]">
        <div className="flex w-[200px] items-center bg-[#c3c3c3] pl-[14px] pr-[11px] text-[15px] text-[#0b80f5]">
          <svg width="15" height="17" viewBox="0 0 15 17" aria-hidden="true">
            <path d="M1 0h10l4 4v12a1 1 0 0 1-1 1H1a1 1 0 0 1-1-1V1a1 1 0 0 1 1-1z" fill="#0080ff" />
            <path d="M4 5h3a3.500 3.500 0 0 1 0 7H4M4 8.500h4" stroke="#fff" strokeWidth="1.500" fill="none" />
          </svg>
          <span className="ml-3">力场分析模型</span>
          <Btn label="关闭标签" className="ml-auto text-[#777]"><X size={13} strokeWidth={2} /></Btn>
        </div>
        <Btn label="新建标签" className="ml-[3px] text-[#333]"><Plus size={23} strokeWidth={2.4} /></Btn>
      </div>
      <HorizontalRuler />
      <div className="flex min-h-0 flex-1">
        <VerticalRuler />
        <div className="relative min-w-0 flex-1 bg-[#e4e4e4]">
          <Diagram />
        </div>
        <div className="w-[15px] shrink-0 border-l border-[#dcdcdc] px-px">
          <div className="mt-[159px] h-[422px] w-3 rounded-full bg-[#bebebe]" />
        </div>
      </div>
      <div className="flex h-4 shrink-0 border-y border-[#dcdcdc] pl-[126px]">
        <div className="my-px flex-1 rounded-full bg-[#bebebe]" />
        <div className="ml-[146px] w-[15px] bg-[#e2e2e2]" />
      </div>
      <div className="flex h-[13px] shrink-0 overflow-hidden pl-[14px] pt-px">
        <Btn label="填充颜色" className="h-5 w-[15px] items-start text-[#333]">
          <Ico size={16}>
            <path d="M2 16L13 4l9 10-10 10zM8 1l10 10" strokeWidth="3" />
          </Ico>
        </Btn>
        <span className="mt-2 flex"><Caret /></span>
        <div className="ml-1 flex flex-1 gap-px">
          {palette.map((c) => <span key={c} className="flex-1" style={{ backgroundColor: "#" + c }} />)}
        </div>
      </div>
    </main>
  );
}

/* ---------- right rail ---------- */

const rail: { label: string; icon: ReactNode }[] = [
  { label: "样式", icon: <><path d="M1 12L11 2l10 10-10 10z" strokeWidth="2.200" /><path d="M2 12c6-3 12 2 18 0l-9 9z" fill="currentColor" stroke="none" /><path d="M8 0l5 5" /><circle cx="22" cy="19" r="1.800" fill="currentColor" stroke="none" /></> },
  { label: "符号", icon: <><rect x="2" y="2" width="8" height="8" rx="1" strokeWidth="2.400" /><rect x="2" y="14" width="8" height="8" rx="1" strokeWidth="2.400" /><rect x="14" y="14" width="8" height="8" rx="1" strokeWidth="2.400" /><path d="M17 2h-3v8h8V6M19 2h1M22 2v2" strokeWidth="2.400" /></> },
  { label: "图片", icon: <><rect x="1" y="3" width="22" height="18" strokeWidth="2.400" /><path d="M3 19v-3l4-3 4 3 4-5 6 7v2z" fill="#777" stroke="none" /><path d="M6 8h2" /></> },
  { label: "图层", icon: <><path d="M12 2l11 7-11 7L1 9z" strokeWidth="2.400" /><path d="M1 14l11 7 11-7" strokeWidth="2.400" /></> },
  { label: "页面", icon: <><path d="M2 2h14l6 6v14H2z" strokeWidth="2.600" /><path d="M6 11h2M10 11h8M6 16h2M10 16h8" strokeWidth="2.400" /></> },
  { label: "平面图", icon: <><path d="M2 2h12v5h8v15H2zM2 9h7M9 2v3M9 9v3M12 22v-7h10M2 15h6v3" strokeWidth="2.400" /></> },
  { label: "思维导图", icon: <><path d="M7 5c5 0 3 14 10 14M17 5c-7 0-5 14-10 14" strokeWidth="2" /><path d="M1 2h7v5H1zM16 2h7v5h-7zM1 17h7v5H1zM16 17h7v5h-7zM9 10h6v4H9z" fill="currentColor" stroke="none" /></> },
  { label: "演示", icon: <><path d="M0 2h24M3 2v15h18V2M9 17l-4 6M15 17l4 6" strokeWidth="2.400" /><path d="M10 6v7l6-3.500z" fill="currentColor" stroke="none" /></> },
  { label: "历史", icon: <><path d="M4 5a10 10 0 1 1-2 7M3 2v5h5" strokeWidth="2.400" /><path d="M12 7v6l4 3" strokeWidth="2.400" /></> },
];

function Rail() {
  return (
    <aside className="flex w-[43px] shrink-0 flex-col border-l border-[#cfcfcf] bg-[#f5f5f5] text-[#444]">
      <Btn label="展开" className="h-[39px] pl-0.5 text-[#777]"><ChevronsLeft size={24} strokeWidth={1.4} /></Btn>
      <div className="flex flex-col gap-3">
        {rail.map((r, i) => (
          <Btn key={r.label} label={r.label} className={`h-11 w-full pl-0.5 ${i === 0 ? "bg-[#0080ff] text-white" : ""}`}>
            <Ico size={i === 0 ? 24 : 22}>{r.icon}</Ico>
          </Btn>
        ))}
      </div>
    </aside>
  );
}

export default function App() {
  return (
    <div className="flex h-screen -scale-x-100 flex-col overflow-hidden bg-[#f5f5f5] font-['Noto_Sans','Noto_Sans_CJK_SC',sans-serif] select-none">
      <Header />
      <Toolbar />
      <div className="flex min-h-0 flex-1">
        <SymbolLibrary />
        <Workspace />
        <Rail />
      </div>
    </div>
  );
}
